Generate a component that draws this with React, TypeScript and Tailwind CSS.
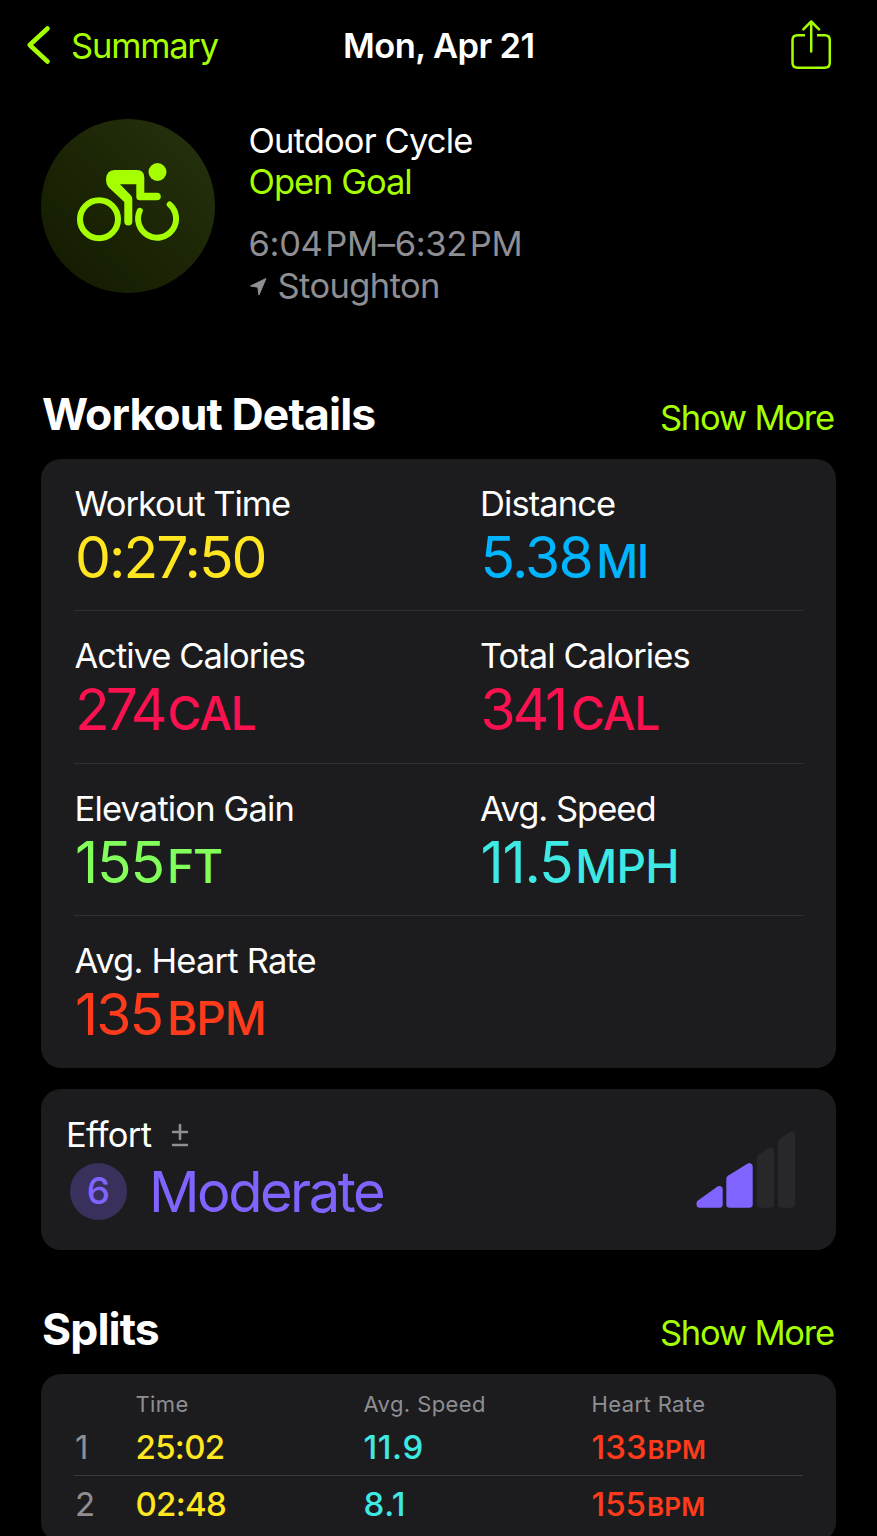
type Metric = { label: string; value: string; unit?: string; color: string; labelSpacing: string; spacing: string; unitSpacing?: string };

const metricRows: Metric[][] = [
  [
    { label: 'Workout Time', value: '0:27:50', color: 'text-[#ffe620]', labelSpacing: 'tracking-[-1px]', spacing: 'tracking-[-2px]' },
    { label: 'Distance', value: '5.38', unit: 'MI', color: 'text-[#00b4ff]', labelSpacing: 'tracking-[-0.9px]', spacing: 'tracking-[-1.7px]', unitSpacing: 'ml-1 tracking-[-1.5px]' },
  ],
  [
    { label: 'Active Calories', value: '274', unit: 'CAL', color: 'text-[#fa114f]', labelSpacing: 'tracking-[-1px]', spacing: 'tracking-[-4px]', unitSpacing: 'ml-1 tracking-[-1px]' },
    { label: 'Total Calories', value: '341', unit: 'CAL', color: 'text-[#fa114f]', labelSpacing: 'tracking-[-0.95px]', spacing: 'tracking-[-3.2px]', unitSpacing: 'ml-[6px] tracking-[-1px]' },
  ],
  [
    { label: 'Elevation Gain', value: '155', unit: 'FT', color: 'text-[#83ff5c]', labelSpacing: 'tracking-[-0.85px]', spacing: 'tracking-[-1.2px]', unitSpacing: 'ml-[3px] tracking-[-1px]' },
    { label: 'Avg. Speed', value: '11.5', unit: 'MPH', color: 'text-[#3ee9e3]', labelSpacing: 'tracking-[-1px]', spacing: 'tracking-[-1.2px]', unitSpacing: 'ml-[3px] tracking-[-0.8px]' },
  ],
  [{ label: 'Avg. Heart Rate', value: '135', unit: 'BPM', color: 'text-[#ff3b1c]', labelSpacing: 'tracking-[-0.8px]', spacing: 'tracking-[-2px]', unitSpacing: 'ml-[5px] tracking-[-1px]' }],
];

const splits = [
  { id: 1, time: '25:02', speed: '11.9', heartRate: '133' },
  { id: 2, time: '02:48', speed: '8.1', heartRate: '155' },
];

function CyclistIcon() {
  return (
    <svg width="174" height="174" viewBox="0 0 174 174" fill="none" className="text-[#a6ff00]">
      <circle cx="58" cy="100.2" r="19" stroke="currentColor" strokeWidth="6" />
      <path d="M98.8 91.8A19 19 0 1 0 128.7 85.5" stroke="currentColor" strokeWidth="6" strokeLinecap="round" />
      <circle cx="116.5" cy="53" r="9" fill="currentColor" />
      <path
        d="M73.5 51H96Q103.3 51 103.3 58.5V73.7H116a3.8 3.8 0 0 1 0 7.6H99Q95.3 81.3 95.3 77.8V65.3H79L90 76.5Q91.3 78 91.3 80V102.5a4 4 0 0 1-8 0V83L67.6 68.2Q65 65.5 65 61Q65.3 51 73.5 51Z"
        fill="currentColor"
      />
    </svg>
  );
}

function EffortBars() {
  return (
    <svg width="100" height="77" viewBox="0 0 100 77" strokeWidth="7" strokeLinejoin="round">
      <g fill="#8164ff" stroke="#8164ff">
        <path d="M4 72.3V73.2H23.2V58.5Z" />
        <path d="M33.8 47.8L53.2 35.7V73.2H33.8Z" />
      </g>
      <g fill="#28282b" stroke="#28282b">
        <path d="M64.2 26.8L74.5 20V73.2H64.2Z" />
        <path d="M85.5 10.8L95.8 4.2V73.2H85.5Z" />
      </g>
    </svg>
  );
}

function SectionHeader({ title }: { title: string }) {
  return (
    <div className="flex h-[56px] items-baseline justify-between pr-0.5 pl-px">
      <h2 className="text-[44.5px] leading-[56px] font-bold tracking-[-0.02em]">{title}</h2>
      <button className="text-[34.5px] leading-[42px] tracking-[-1.2px] text-[#a6ff00]">Show More</button>
    </div>
  );
}

function MetricCell({ metric }: { metric: Metric }) {
  return (
    <div className="w-[405.5px] shrink-0 pt-6 pl-[0.5px]">
      <div className={`text-[34.5px] leading-[42px] ${metric.labelSpacing}`}>{metric.label}</div>
      <div className={`mt-0.5 pl-[0.5px] text-[57px] leading-[62px] ${metric.color} ${metric.spacing}`}>
        {metric.value}
        {metric.unit && <span className={`text-[46px] font-medium ${metric.unitSpacing}`}>{metric.unit}</span>}
      </div>
    </div>
  );
}

export default function App() {
  return (
    <div className="h-[1536px] w-[877px] overflow-hidden bg-black font-['Inter',sans-serif] text-white">
      <header className="grid h-[90px] grid-cols-[1fr_auto_1fr] items-center pr-[45.5px] pl-[26px]">
        <button className="flex items-center gap-[19px] text-[#a6ff00]">
          <svg width="26" height="40" viewBox="0 0 26 40" fill="none" stroke="currentColor" strokeWidth="4.6" strokeLinecap="round" strokeLinejoin="round">
            <path d="M21.5 3.5L3.7 20L21.5 36.5" />
          </svg>
          <span className="pt-0.5 text-[34.5px] leading-[42px] tracking-[-1.2px]">Summary</span>
        </button>
        <h1 className="pt-0.5 pl-5 text-[34.5px] leading-[42px] font-semibold tracking-[-0.6px] whitespace-nowrap">Mon, Apr 21</h1>
        <svg width="42" height="52" viewBox="0 0 42 52" fill="none" stroke="#a6ff00" strokeWidth="2.5" strokeLinecap="round" strokeLinejoin="round" className="justify-self-end">
          <path d="M15 16.2H7.5Q2.5 16.2 2.5 21.2V43.8Q2.5 48.8 7.5 48.8H34.8Q39.8 48.8 39.8 43.8V21.2Q39.8 16.2 34.8 16.2H27" strokeLinecap="butt" />
          <path d="M21.2 32.5V2.7M13.3 10.3L21.2 2.5L29 10.3" />
        </svg>
      </header>

      <section className="flex h-[203px] gap-[33.5px] px-[41px] pt-[29px]">
        <div className="h-[174px] w-[174px] rounded-full bg-linear-to-tr from-[#121a00] to-[#263210]">
          <CyclistIcon />
        </div>
        <div className="pt-px text-[34.5px] leading-[42px]">
          <div className="tracking-[-0.85px]">Outdoor Cycle</div>
          <div className="-mt-px tracking-[-1px] text-[#a6ff00]">Open Goal</div>
          <div className="mt-5 tracking-[-0.35px] text-[#8e8e93]">6:04&#8202;PM–6:32&#8202;PM</div>
          <div className="flex items-center gap-[11px] tracking-[-0.6px] text-[#8e8e93]">
            <svg width="18" height="19" viewBox="0 0 18 19" fill="currentColor" stroke="currentColor" strokeLinejoin="round">
              <path d="M1.5 9L17 1.5L10 18L8.8 10.2Z" />
            </svg>
            Stoughton
          </div>
        </div>
      </section>

      <main className="px-[41px] pt-[93px]">
        <SectionHeader title="Workout Details" />
        <div className="mt-[17px] h-[609px] rounded-[20px] bg-[#1c1c1e] px-[33px]">
          {metricRows.map((row) => (
            <div key={row[0].label} className="flex h-[152.25px] border-b border-[#303033] last:border-0">
              {row.map((metric) => (
                <MetricCell key={metric.label} metric={metric} />
              ))}
            </div>
          ))}
        </div>

        <div className="mt-[21px] flex h-[161px] items-start justify-between rounded-[20px] bg-[#1c1c1e] pr-10 pl-[25px]">
          <div className="pt-[25px]">
            <div className="flex items-center gap-5 text-[34.5px] leading-[42px] tracking-[-0.7px]">
              Effort
              <svg width="18" height="24" viewBox="0 0 18 24" fill="none" stroke="#8e8e93" strokeWidth="2.6" strokeLinecap="round">
                <path d="M9 2V16M2 9H16M2 22H16" />
              </svg>
            </div>
            <div className="flex items-start gap-[22px] pl-1 text-[#8164ff]">
              <div className="mt-[6.5px] flex h-[57px] w-[57px] items-center justify-center rounded-full bg-[#3a305c] text-[37px] font-medium">6</div>
              <div className="pt-px text-[56px] leading-[70px] tracking-[-2.5px]">Moderate</div>
            </div>
          </div>
          <div className="pt-[42px]">
            <EffortBars />
          </div>
        </div>

        <div className="pt-[51px]">
          <SectionHeader title="Splits" />
        </div>
        <div className="mt-[17px] h-[168px] rounded-[20px] bg-[#1c1c1e] px-[33px] pt-[15px]">
          <div className="grid h-[30px] grid-cols-[61.5px_228px_228px_1fr] text-[22px] leading-[30px] tracking-[0.4px] text-[#8e8e93]">
            <span />
            <span>Time</span>
            <span>Avg. Speed</span>
            <span>Heart Rate</span>
          </div>
          {splits.map((split) => (
            <div key={split.id} className="grid h-[57px] grid-cols-[61.5px_228px_228px_1fr] border-b border-[#3a3a3d] text-[33px] leading-[57px] font-medium last:border-0">
              <span className="pl-px font-normal text-[#8e8e93]">{split.id}</span>
              <span className="tracking-[-0.7px] text-[#ffe620]">{split.time}</span>
              <span className="tracking-[0.6px] text-[#3ee9e3]">{split.speed}</span>
              <span className="text-[#ff3b1c]">
                {split.heartRate}
                <span className="ml-px text-[26px] font-semibold tracking-[0.2px]">BPM</span>
              </span>
            </div>
          ))}
        </div>
      </main>
    </div>
  );
}
